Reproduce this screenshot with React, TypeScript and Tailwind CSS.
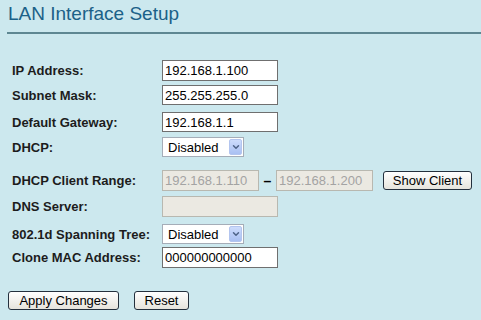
import { ChevronDown } from 'lucide-react'

const labelCls = "w-[162px] shrink-0 pl-[12px] text-[13px] font-bold text-[#1c1c1c] leading-none"

function TextBox({ value, w = 'w-[116px]', h = 'h-[21px]' }: { value: string; w?: string; h?: string }) {
  return (
    <div className={`${w} ${h} shrink-0 bg-white border border-[#6f6f6f] flex items-center pl-[2px] text-[13px] text-black leading-none`}>
      {value}
    </div>
  )
}

function DisabledBox({ value, w = 'w-[116px]' }: { value?: string; w?: string }) {
  return (
    <div className={`${w} h-[21px] shrink-0 bg-[#ebe9e2] border border-[#b8b8b0] flex items-center pl-[2px] text-[13px] text-[#a3a3a3] leading-none`}>
      {value}
    </div>
  )
}

function SelectBox({ value, h = 'h-[20px]' }: { value: string; h?: string }) {
  return (
    <div className={`w-[82px] ${h} shrink-0 bg-white border border-[#a5adb8] flex items-center justify-between pl-[5px] pr-[1px] text-[13px] text-black leading-none`}>
      <span>{value}</span>
      <span className="w-[13px] h-[16px] rounded-[2px] bg-gradient-to-b from-[#cddcfc] to-[#a9c0f2] border border-[#b3c5ef] flex items-center justify-center">
        <ChevronDown size={10} strokeWidth={3.5} className="text-[#4d6287]" />
      </span>
    </div>
  )
}

function XpButton({ label, w }: { label: string; w: string }) {
  return (
    <button className={`${w} h-[19px] shrink-0 rounded-[3px] border border-[#24303d] bg-gradient-to-b from-white to-[#e6e4dc] text-[13px] text-black leading-none flex items-center justify-center`}>
      {label}
    </button>
  )
}

export default function App() {
  return (
    <div className="w-[481px] h-[320px] overflow-hidden bg-[#cce8ee] font-['Liberation_Sans',Arial,sans-serif]">
      {/* Header */}
      <div className="pt-[3px] pl-[8px] text-[19px] leading-[22px] text-[#1b6188]">LAN Interface Setup</div>
      <div className="mt-[7px] ml-[7px] h-[2px] bg-[#5e8792]" />

      {/* Form */}
      <div className="mt-[26px] flex flex-col">
        <div className="flex items-center h-[21px]">
          <div className={labelCls}>IP Address:</div>
          <TextBox value="192.168.1.100" />
        </div>
        <div className="flex items-center h-[20px] mt-[4px]">
          <div className={labelCls}>Subnet Mask:</div>
          <TextBox value="255.255.255.0" h="h-[20px]" />
        </div>
        <div className="flex items-center h-[20px] mt-[7px]">
          <div className={labelCls}>Default Gateway:</div>
          <TextBox value="192.168.1.1" h="h-[20px]" />
        </div>
        <div className="flex items-center h-[20px] mt-[5px]">
          <div className={labelCls}>DHCP:</div>
          <SelectBox value="Disabled" />
        </div>
        <div className="flex items-center h-[21px] mt-[13px]">
          <div className={labelCls}>DHCP Client Range:</div>
          <DisabledBox value="192.168.1.110" w="w-[97px]" />
          <span className="w-[17px] shrink-0 text-center text-[14px] font-bold leading-none text-black">–</span>
          <DisabledBox value="192.168.1.200" w="w-[97px]" />
          <div className="ml-[10px]">
            <XpButton label="Show Client" w="w-[89px]" />
          </div>
        </div>
        <div className="flex items-center h-[21px] mt-[5px]">
          <div className={labelCls}>DNS Server:</div>
          <DisabledBox />
        </div>
        <div className="flex items-center h-[20px] mt-[7px]">
          <div className={labelCls}>802.1d Spanning Tree:</div>
          <SelectBox value="Disabled" />
        </div>
        <div className="flex items-center h-[21px] mt-[3px]">
          <div className={labelCls}>Clone MAC Address:</div>
          <TextBox value="000000000000" />
        </div>
      </div>

      {/* Actions */}
      <div className="mt-[23px] pl-[8px] flex gap-[15px]">
        <XpButton label="Apply Changes" w="w-[111px]" />
        <XpButton label="Reset" w="w-[55px]" />
      </div>
    </div>
  )
}
